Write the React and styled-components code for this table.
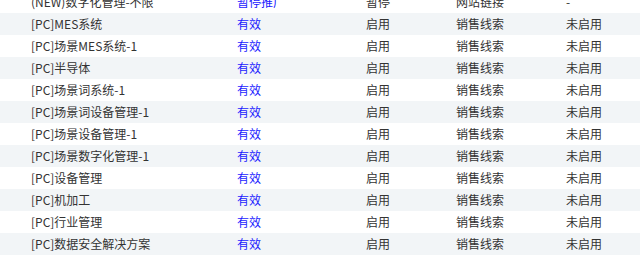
import styled, { createGlobalStyle } from "styled-components";

const rows = [
  { name: "(NEW)数字化管理-不限", status: "暂停推广", state: "暂停", source: "网站链接", flag: "-" },
  { name: "[PC]MES系统" },
  { name: "[PC]场景MES系统-1" },
  { name: "[PC]半导体" },
  { name: "[PC]场景词系统-1" },
  { name: "[PC]场景词设备管理-1" },
  { name: "[PC]场景设备管理-1" },
  { name: "[PC]场景数字化管理-1" },
  { name: "[PC]设备管理" },
  { name: "[PC]机加工" },
  { name: "[PC]行业管理" },
  { name: "[PC]数据安全解决方案" },
];

const App = () => {
  return (
    <>
      <Global />
      <Table>
        {rows.map((r, i) => (
          <Row key={i} $striped={i % 2 === 1}>
            <Cell>{r.name}</Cell>
            <Status>{r.status || "有效"}</Status>
            <Cell>{r.state || "启用"}</Cell>
            <Cell>{r.source || "销售线索"}</Cell>
            <Cell>{r.flag || "未启用"}</Cell>
          </Row>
        ))}
      </Table>
    </>
  );
};

export default App;

const Global = createGlobalStyle`
  body {
    margin: 0;
    background: #fff;
    font-family: "Noto Sans CJK SC", "Noto Sans", sans-serif;
    overflow: hidden;
  }
`;

const Table = styled.div`
  display: flex;
  flex-direction: column;
  margin-top: -9px;
`;

const Row = styled.div`
  display: grid;
  grid-template-columns: 206px 129px 90px 110px 1fr;
  height: 22px;
  padding-left: 31px;
  align-items: center;
  background: ${(p) => (p.$striped ? "#f2f5f7" : "#fff")};
`;

const Cell = styled.div`
  font-size: 12px;
  line-height: 22px;
  color: #333;
  white-space: nowrap;
`;

const Status = styled(Cell)`
  color: #1a1aff;
`;
